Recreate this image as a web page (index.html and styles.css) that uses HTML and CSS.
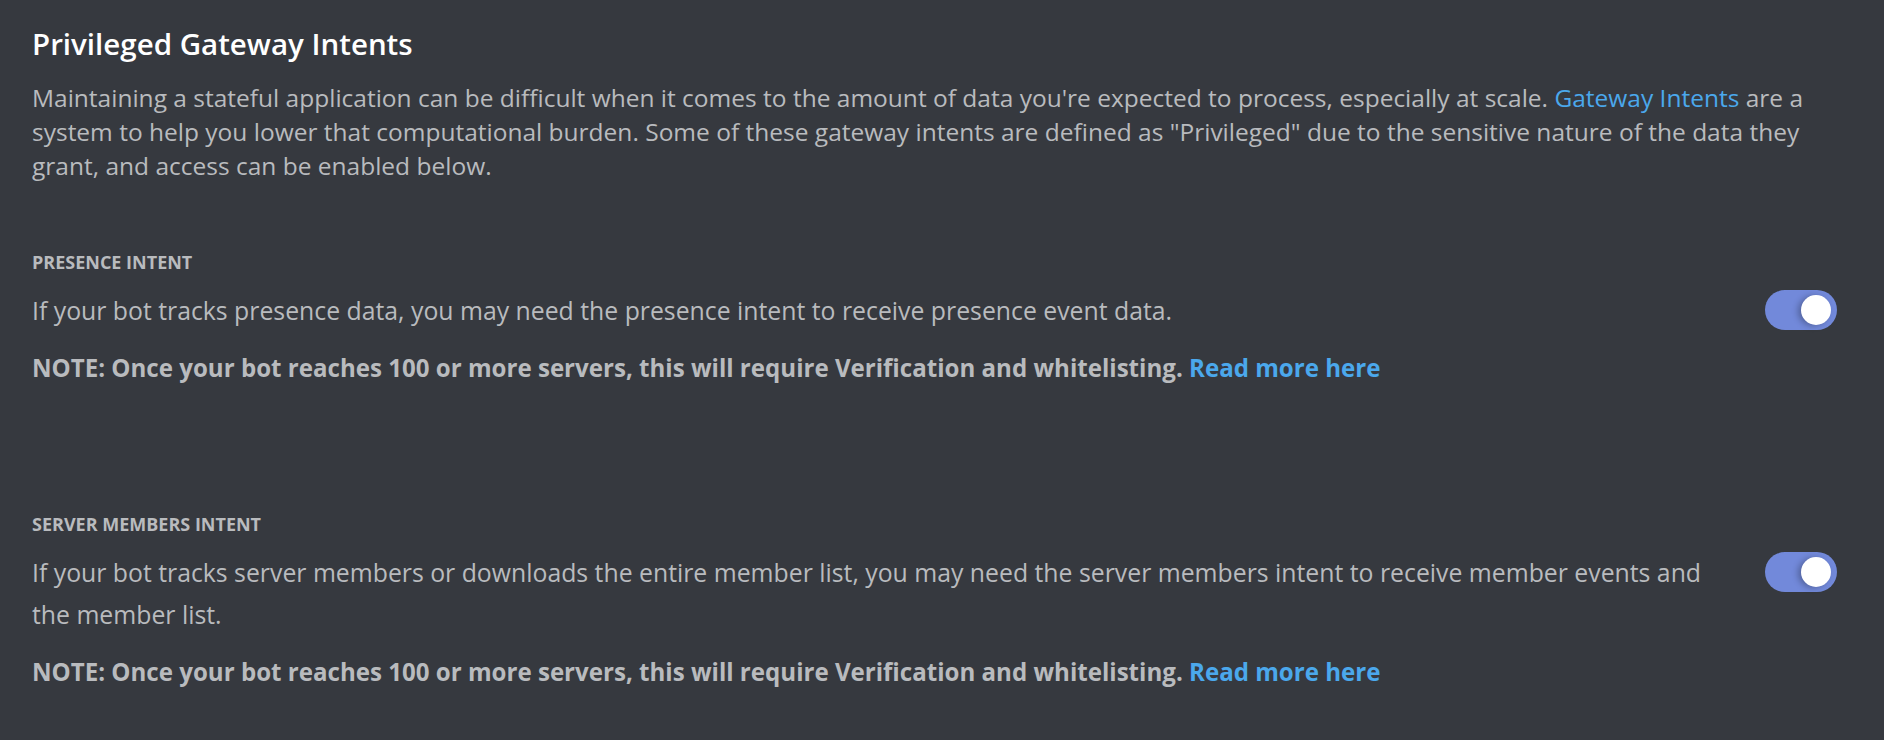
FILE: index.html
```html
<!DOCTYPE html>
<html lang="en">
<head>
<meta charset="utf-8">
<title>Privileged Gateway Intents</title>
<link rel="stylesheet" href="styles.css">
</head>
<body>
<main class="page">
  <h1 class="title">Privileged Gateway Intents</h1>
  <p class="intro">Maintaining a stateful application can be difficult when it comes to the amount of data you're expected to process, especially at scale. <a class="link" href="#">Gateway Intents</a> are a system to help you lower that computational burden. Some of these gateway intents are defined as "Privileged" due to the sensitive nature of the data they grant, and access can be enabled below.</p>

  <section class="intent intent-first">
    <h2 class="label">Presence Intent</h2>
    <div class="row">
      <div class="text">
        <p class="desc">If your bot tracks presence data, you may need the presence intent to receive presence event data.</p>
        <p class="note">NOTE: Once your bot reaches 100 or more servers, this will require Verification and whitelisting. <a class="link" href="#">Read more here</a></p>
      </div>
      <div class="toggle"><span class="knob"></span></div>
    </div>
  </section>

  <section class="intent intent-second">
    <h2 class="label">Server Members Intent</h2>
    <div class="row">
      <div class="text">
        <p class="desc">If your bot tracks server members or downloads the entire member list, you may need the server members intent to receive member events and the member list.</p>
        <p class="note">NOTE: Once your bot reaches 100 or more servers, this will require Verification and whitelisting. <a class="link" href="#">Read more here</a></p>
      </div>
      <div class="toggle"><span class="knob"></span></div>
    </div>
  </section>
</main>
</body>
</html>
```

FILE: styles.css
```css
html, body {
  margin: 0;
  padding: 0;
  background: #36393f;
}

body {
  font-family: "Open Sans", "Liberation Sans", sans-serif;
  color: #b9bbbe;
  min-height: 740px;
}

.page {
  width: 1805px;
  padding: 27px 0 0 32px;
  box-sizing: content-box;
}

.title {
  margin: 0;
  font-size: 29.5px;
  line-height: 34px;
  font-weight: 600;
  color: #ffffff;
}

.intro {
  margin: 20px 0 0;
  font-size: 24.5px;
  line-height: 34px;
}

.link {
  color: #4ba8ec;
  text-decoration: none;
}

.intent-first {
  margin-top: 69px;
}

.intent-second {
  margin-top: 131px;
}

.label {
  margin: 0;
  font-size: 18px;
  line-height: 20px;
  font-weight: 700;
  text-transform: uppercase;
  color: #b9bbbe;
}

.row {
  display: flex;
  align-items: flex-start;
  gap: 60px;
  margin-top: 17px;
}

.text {
  flex: 1;
}

.desc {
  margin: 0;
  font-size: 24.8px;
  line-height: 42px;
}

.note {
  margin: 22px 0 0;
  font-size: 24.1px;
  line-height: 30px;
  font-weight: 700;
}

.toggle {
  flex: none;
  width: 72px;
  height: 40px;
  margin-top: 1px;
  border-radius: 20px;
  background: #7289da;
  display: flex;
  align-items: center;
  justify-content: flex-end;
  padding: 0 6px;
  box-sizing: border-box;
}

.knob {
  width: 30px;
  height: 30px;
  border-radius: 50%;
  background: #ffffff;
  box-shadow: -3px 1px 6px rgba(0, 0, 0, 0.28);
}
```
